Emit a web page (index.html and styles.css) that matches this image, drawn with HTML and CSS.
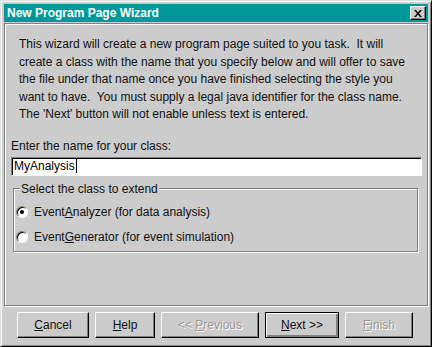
FILE: index.html
```html
<!DOCTYPE html>
<html lang="en">
<head>
    <meta charset="UTF-8">
    <title>New Program Page Wizard</title>
    <link rel="stylesheet" href="styles.css">
</head>
<body>

<div class="window">
    <!-- Title bar -->
    <div class="titlebar">
        <span class="title">New Program Page Wizard</span>
        <span class="close">
            <svg width="8" height="7" viewBox="0 0 8 7">
                <path d="M0 0h2l2 2.5L6 0h2L5 3.5 8 7H6L4 4.5 2 7H0l3-3.5z" fill="#000"/>
            </svg>
        </span>
    </div>

    <!-- Wizard page -->
    <div class="panel">
        <p class="intro">This wizard will create a new program page suited to you task.&nbsp; It will<br>
            create a class with the name that you specify below and will offer to save<br>
            the file under that name once you have finished selecting the style you<br>
            want to have.&nbsp; You must supply a legal java identifier for the class name.<br>
            The 'Next' button will not enable unless text is entered.</p>

        <label class="field-label" for="className">Enter the name for your class:</label>
        <div class="textfield"><span id="className">MyAnalysis</span><span class="caret"></span></div>

        <fieldset class="group">
            <legend>Select the class to extend</legend>
            <div class="radio-row">
                <span class="radio checked"></span>
                <span>Event<u>A</u>nalyzer (for data analysis)</span>
            </div>
            <div class="radio-row">
                <span class="radio"></span>
                <span>Event<u>G</u>enerator (for event simulation)</span>
            </div>
        </fieldset>
    </div>

    <!-- Buttons -->
    <div class="buttons">
        <button class="btn btn-cancel"><u>C</u>ancel</button>
        <button class="btn btn-help"><u>H</u>elp</button>
        <button class="btn btn-prev" disabled>&lt;&lt; <u>P</u>revious</button>
        <button class="btn btn-next default"><u>N</u>ext &gt;&gt;</button>
        <button class="btn btn-finish" disabled><u>F</u>inish</button>
    </div>
</div>

</body>
</html>
```

FILE: styles.css
```css
body {
    margin: 0;
    padding: 0;
    background-color: #cccccc;
    font-family: "Liberation Sans", Arial, sans-serif;
    font-size: 12px;
    color: #111;
}
.window {
    width: 432px;
    height: 347px;
    box-sizing: border-box;
    display: flex;
    flex-direction: column;
    padding: 3px;
    background-color: #cccccc;
    border: 1px solid;
    border-color: #dfdfdf #000 #000 #dfdfdf;
    box-shadow: inset 1px 1px #fff, inset -1px -1px #808080;
}
.titlebar {
    height: 18px;
    display: flex;
    align-items: center;
    justify-content: space-between;
    background-color: #009999;
    padding-left: 3px;
}
.title {
    color: #fff;
    font-weight: bold;
    font-size: 12px;
}
.close {
    width: 16px;
    height: 14px;
    box-sizing: border-box;
    margin-right: 2px;
    display: flex;
    align-items: center;
    justify-content: center;
    background-color: #cccccc;
    border: 1px solid;
    border-color: #fff #000 #000 #fff;
    box-shadow: inset -1px -1px #808080;
}
.panel {
    height: 283px;
    box-sizing: border-box;
    margin-top: 1px;
    padding: 6px 6px 0 6px;
    border: 1px solid #808080;
    box-shadow: inset 1px 1px #fff, 1px 1px #fff;
}
.intro {
    margin: 6px 0 0 8px;
    line-height: 17.5px;
    white-space: nowrap;
}
.field-label {
    display: block;
    margin-top: 14px;
    line-height: 17px;
}
.textfield {
    height: 19px;
    box-sizing: border-box;
    margin: 2px 0 0 0;
    width: 411px;
    display: flex;
    align-items: center;
    padding-left: 2px;
    background-color: #fff;
    color: #000;
    border: 1px solid;
    border-color: #808080 #fff #fff #808080;
    box-shadow: inset 1px 1px #000;
}
.caret {
    width: 1px;
    height: 14px;
    background-color: #000;
    margin-left: 1px;
}
.group {
    margin: 6px 3px 0 2px;
    padding: 4px 8px 0 2px;
    height: 70px;
    box-sizing: border-box;
    border: 1px solid #808080;
    box-shadow: inset 1px 1px #fff, 1px 1px #fff;
}
.group legend {
    margin-left: 4px;
    padding: 0 1px;
    line-height: 14px;
    background-color: #cccccc;
}
.radio-row {
    height: 25px;
    display: flex;
    align-items: center;
    gap: 6px;
}
.radio {
    width: 12px;
    height: 12px;
    box-sizing: border-box;
    border-radius: 50%;
    background-color: #fff;
    border: 1px solid;
    border-color: #808080 #fff #fff #808080;
    box-shadow: inset 1px 1px #000;
    display: flex;
    align-items: center;
    justify-content: center;
}
.radio.checked::after {
    content: "";
    width: 4px;
    height: 4px;
    border-radius: 50%;
    background-color: #000;
}
.buttons {
    display: flex;
    gap: 6px;
    padding: 6px 0 0 13px;
}
.btn {
    height: 26px;
    box-sizing: border-box;
    padding: 0;
    font-family: "Liberation Sans", Arial, sans-serif;
    font-size: 12px;
    color: #111;
    background-color: #cccccc;
    border: 1px solid;
    border-color: #fff #000 #000 #fff;
    box-shadow: inset -1px -1px #808080;
}
.btn.default {
    border: 1px solid #000;
    box-shadow: inset 1px 1px #fff, inset -2px -2px #808080;
}
.btn:disabled {
    color: #999;
    text-shadow: 1px 1px #fff;
}
.btn-cancel { width: 72px; }
.btn-help { width: 60px; }
.btn-prev { width: 98px; }
.btn-next { width: 74px; }
.btn-finish { width: 68px; }
```
